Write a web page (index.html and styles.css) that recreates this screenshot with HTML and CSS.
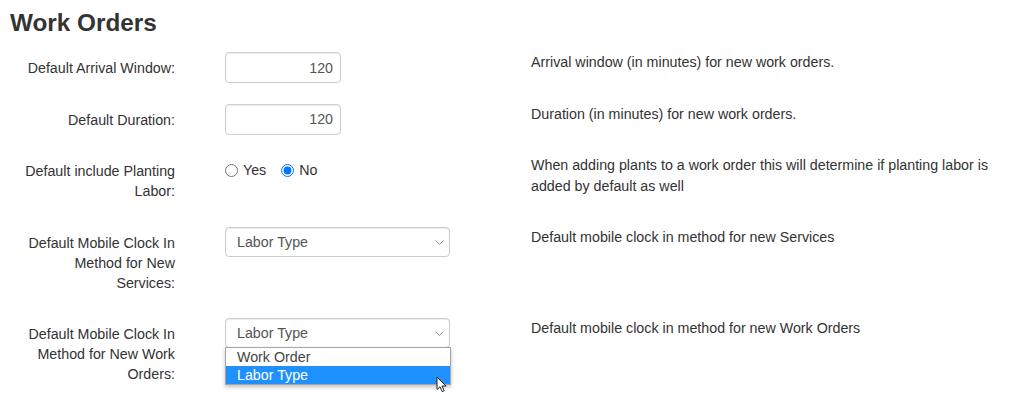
FILE: index.html
```html
<!DOCTYPE html>
<html>
<head>
<meta charset="utf-8">
<link rel="stylesheet" href="styles.css">
</head>
<body>
<div class="page">
  <h2 class="title">Work Orders</h2>

  <div class="form-row">
    <label class="row-label">Default Arrival Window:</label>
    <div class="row-control"><input class="num-input" type="text" value="120"></div>
    <p class="row-help">Arrival window (in minutes) for new work orders.</p>
  </div>

  <div class="form-row">
    <label class="row-label">Default Duration:</label>
    <div class="row-control"><input class="num-input" type="text" value="120"></div>
    <p class="row-help">Duration (in minutes) for new work orders.</p>
  </div>

  <div class="form-row">
    <label class="row-label">Default include Planting Labor:</label>
    <div class="row-control radios">
      <label class="radio"><input type="radio" name="plant">Yes</label>
      <label class="radio"><input type="radio" name="plant" checked>No</label>
    </div>
    <p class="row-help">When adding plants to a work order this will determine if planting labor is added by default as well</p>
  </div>

  <div class="form-row">
    <label class="row-label">Default Mobile Clock In Method for New Services:</label>
    <div class="row-control">
      <div class="select-wrap">
        <div class="select-box">Labor Type</div>
        <svg class="chevron" width="9" height="5" viewBox="0 0 9 5"><path d="M0.5 0.5 L4.5 4.3 L8.5 0.5" fill="none" stroke="#888" stroke-width="1"/></svg>
      </div>
    </div>
    <p class="row-help">Default mobile clock in method for new Services</p>
  </div>

  <div class="form-row">
    <label class="row-label">Default Mobile Clock In Method for New Work Orders:</label>
    <div class="row-control">
      <div class="select-wrap">
        <div class="select-box">Labor Type</div>
        <svg class="chevron" width="9" height="5" viewBox="0 0 9 5"><path d="M0.5 0.5 L4.5 4.3 L8.5 0.5" fill="none" stroke="#888" stroke-width="1"/></svg>
        <ul class="dropdown">
          <li class="option">Work Order</li>
          <li class="option selected">Labor Type</li>
        </ul>
        <svg class="cursor" width="13" height="17" viewBox="0 0 13 17"><path d="M1 1 L1 13.5 L4 10.8 L6.2 15.6 L8.2 14.7 L6 10 L10 10 Z" fill="#fff" stroke="#222" stroke-width="1" stroke-linejoin="round"/></svg>
      </div>
    </div>
    <p class="row-help">Default mobile clock in method for new Work Orders</p>
  </div>
</div>
</body>
</html>
```

FILE: styles.css
```css
* { box-sizing: border-box; }

html, body {
  margin: 0;
  padding: 0;
  background: #fff;
}

body {
  font-family: "Liberation Sans", Arial, sans-serif;
  font-size: 14.25px;
  line-height: 20px;
  color: #333;
}

.page {
  width: 1024px;
}

.title {
  margin: 10px 0 16px 10px;
  font-size: 24.3px;
  line-height: 26px;
  font-weight: bold;
  color: #333;
}

.form-row {
  display: grid;
  grid-template-columns: 225px 306px 1fr;
  margin-bottom: 19.5px;
}

.row-label {
  padding: 6px 50px 6px 18px;
  text-align: right;
  line-height: 20px;
}

.row-control {
  min-width: 0;
}

.row-help {
  margin: 0;
  padding: 0 15px 0 0;
  line-height: 21px;
}

.num-input {
  display: block;
  width: 116px;
  height: 31px;
  padding: 0 7px;
  border: 1px solid #ccc;
  border-radius: 4px;
  box-shadow: inset 0 1px 1px rgba(0, 0, 0, 0.075);
  font-family: "Liberation Sans", Arial, sans-serif;
  font-size: 14.25px;
  color: #555;
  text-align: right;
  outline: none;
}

.radios {
  display: flex;
  gap: 15px;
  padding-top: 5px;
}

.radio {
  display: flex;
  align-items: center;
  height: 20px;
}

.radio input {
  width: 13px;
  height: 13px;
  margin: 0 5px 0 0;
}

.select-wrap {
  position: relative;
  width: 225px;
}

.select-box {
  height: 30px;
  padding: 0 11px;
  border: 1px solid #ccc;
  border-radius: 4px;
  box-shadow: inset 0 1px 1px rgba(0, 0, 0, 0.075);
  line-height: 28px;
  color: #555;
  background: #fff;
}

.chevron {
  position: absolute;
  right: 6px;
  top: 13px;
}

.dropdown {
  position: absolute;
  left: 0;
  top: 29px;
  width: 226px;
  margin: 0;
  padding: 0;
  list-style: none;
  background: #fff;
  border: 1px solid #a6a6a6;
  box-shadow: 0 2px 4px rgba(0, 0, 0, 0.25);
  z-index: 2;
}

.option {
  height: 18px;
  padding: 0 11px;
  line-height: 18px;
  color: #444;
}

.option.selected {
  background: #1e90ff;
  color: #fff;
}

.cursor {
  position: absolute;
  left: 211px;
  top: 58px;
  z-index: 3;
}
```
